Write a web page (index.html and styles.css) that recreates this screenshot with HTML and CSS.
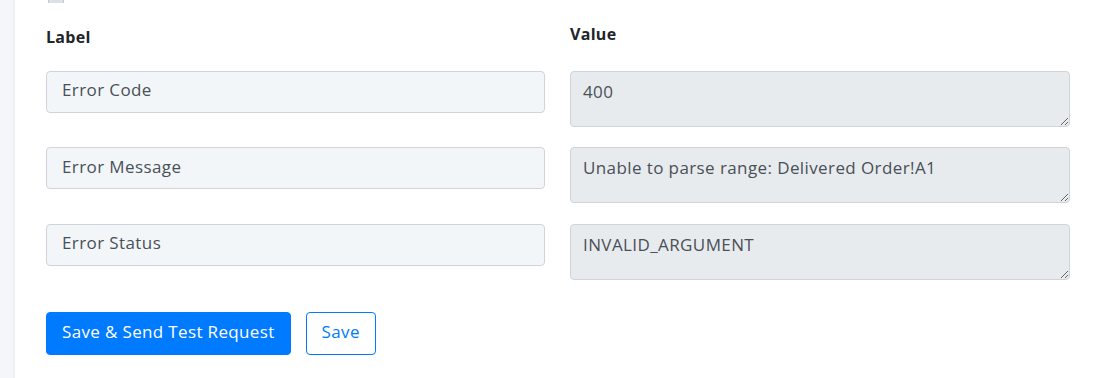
FILE: index.html
```html
<!DOCTYPE html>
<html lang="en">
<head>
    <meta charset="UTF-8">
    <title>Response Mapping</title>
    <link rel="stylesheet" href="styles.css">
</head>
<body>
    <div class="page">
        <div class="sidebar"></div>
        <div class="main">
            <div class="check-row"><span class="check"></span></div>

            <div class="mapping">
                <div class="col-head label-head">Label</div>
                <div class="col-head value-head">Value</div>

                <input class="label-input" type="text" value="Error Code">
                <textarea class="value-input" readonly>400</textarea>

                <input class="label-input" type="text" value="Error Message">
                <textarea class="value-input" readonly>Unable to parse range: Delivered Order!A1</textarea>

                <input class="label-input" type="text" value="Error Status">
                <textarea class="value-input" readonly>INVALID_ARGUMENT</textarea>
            </div>

            <div class="actions">
                <button class="btn btn-primary">Save &amp; Send Test Request</button>
                <button class="btn btn-outline">Save</button>
            </div>
        </div>
    </div>
</body>
</html>
```

FILE: styles.css
```css
body {
    margin: 0;
    padding: 0;
    font-family: 'Open Sans', 'Noto Sans', sans-serif;
    color: #212529;
    background-color: #fff;
}
.page {
    display: flex;
    height: 378px;
    overflow: hidden;
}
.sidebar {
    width: 13px;
    background-color: #f4f6f9;
    border-right: 2px solid #eceff3;
    flex-shrink: 0;
}
.main {
    flex: 1;
    padding: 0 28px 0 31px;
}
.check-row {
    height: 3px;
    overflow: hidden;
    padding-left: 2px;
}
.check {
    display: block;
    width: 14px;
    height: 14px;
    margin-top: -11px;
    border: 1px solid #c3c9d2;
    border-radius: 3px;
    background-color: #dde1e7;
}
.mapping {
    display: grid;
    grid-template-columns: 499px 500px;
    column-gap: 25px;
    row-gap: 20.5px;
    align-items: start;
    margin-top: 17px;
}
.col-head {
    font-size: 16px;
    font-weight: 700;
    letter-spacing: 0.3px;
    color: #212529;
    line-height: 22px;
}
.label-head {
    padding-top: 6px;
    margin-bottom: 2px;
}
.value-head {
    padding-top: 3px;
    margin-bottom: 5px;
}
.label-input,
.value-input {
    box-sizing: border-box;
    width: 100%;
    margin: 0;
    font-family: inherit;
    font-size: 17px;
    letter-spacing: 0.4px;
    color: #495057;
    border: 1px solid #ced4da;
    border-radius: 4px;
    outline: none;
}
.label-input {
    height: 42px;
    padding: 0 15px 4px;
    background-color: #f3f6f9;
}
.value-input {
    display: block;
    height: 56px;
    padding: 8px 12px 6px;
    line-height: 24px;
    background-color: #e8ebee;
    resize: vertical;
}
.actions {
    display: flex;
    gap: 15px;
    margin-top: 32px;
}
.btn {
    height: 43px;
    font-family: inherit;
    font-size: 17px;
    letter-spacing: 0.35px;
    border-radius: 4px;
    padding: 0 15px 4px;
    cursor: pointer;
}
.btn-primary {
    background-color: #007bff;
    border: 1px solid #007bff;
    color: #fff;
}
.btn-outline {
    background-color: #fff;
    border: 1px solid #007bff;
    color: #007bff;
}
```
